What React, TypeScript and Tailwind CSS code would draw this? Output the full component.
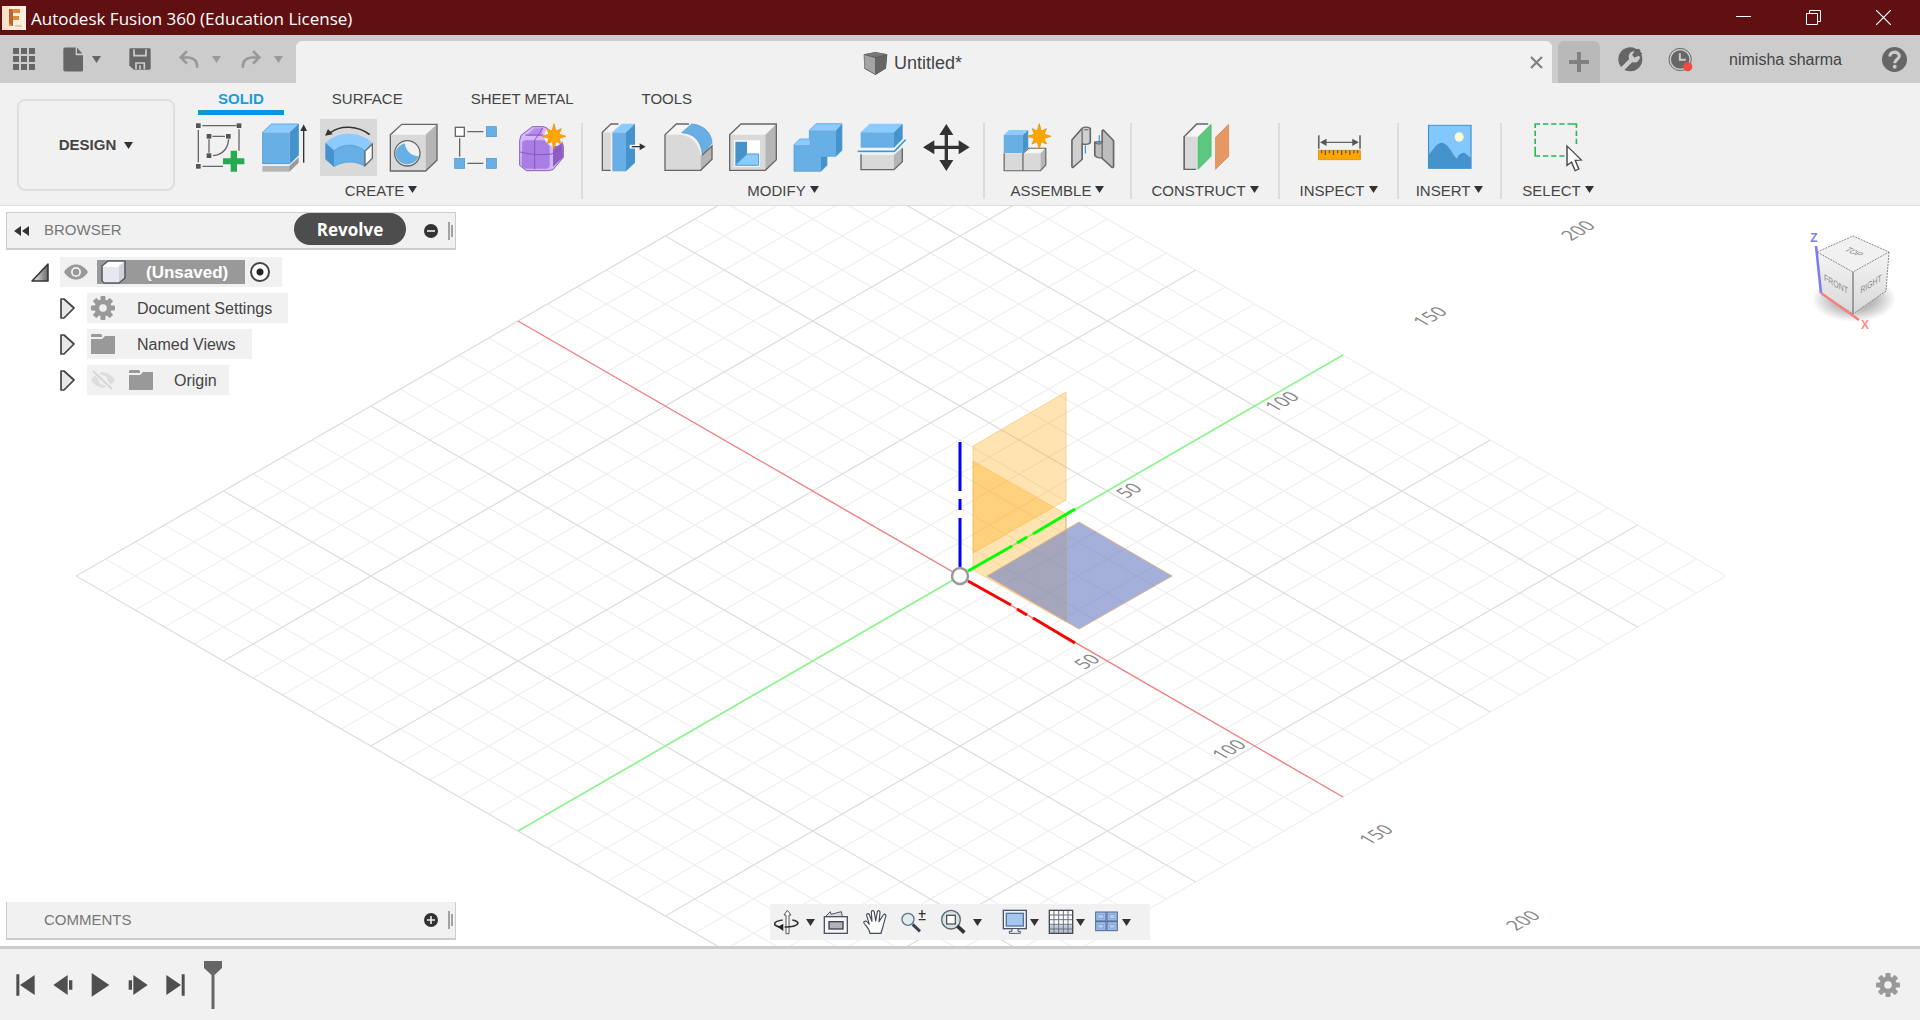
import React from "react";

const UI = "font-['Liberation_Sans',sans-serif]";
const HUMANIST = "font-['Open_Sans',sans-serif]";

/* ---------- shared pieces ---------- */

function Caret({ className = "text-[#333]" }: { className?: string }) {
  return (
    <svg className={`h-[7px] w-[9px] shrink-0 ${className}`} viewBox="0 0 9 7" aria-hidden="true">
      <path d="M0 0H9L4.500 7Z" fill="currentColor" />
    </svg>
  );
}

function Art({
  box,
  className,
  stretch = false,
  children,
}: {
  box: string;
  className: string;
  stretch?: boolean;
  children: React.ReactNode;
}) {
  return (
    <svg
      viewBox={box}
      className={`shrink-0 ${className}`}
      preserveAspectRatio={stretch ? "none" : "xMidYMid meet"}
      aria-hidden="true"
    >
      {children}
    </svg>
  );
}

function Tool({
  name,
  box,
  active = false,
  stretch = false,
  children,
}: {
  name: string;
  box: string;
  active?: boolean;
  stretch?: boolean;
  children: React.ReactNode;
}) {
  return (
    <div className="flex justify-center">
      <button type="button" aria-label={name} className={active ? "bg-[#d9d9d9]" : ""}>
        <Art box={box} className="h-[57px] w-[57px]" stretch={stretch}>
          {children}
        </Art>
      </button>
    </div>
  );
}

function Group({
  label,
  width,
  inner,
  last = false,
  children,
}: {
  label: string;
  width: string;
  inner: string;
  last?: boolean;
  children: React.ReactNode;
}) {
  return (
    <section className={`relative flex flex-col items-center pt-1 ${width}`}>
      <div className={`grid ${inner}`}>{children}</div>
      <button type="button" className="mt-[5px] flex items-center gap-1 text-[15px] leading-5 text-[#444]">
        {label}
        <span className="pb-1">
          <Caret />
        </span>
      </button>
      {!last && <span className="absolute right-0 top-2 h-[76px] w-[2px] bg-[#dcdcdc]" />}
    </section>
  );
}

/* ---------- title bar ---------- */

function TitleBar() {
  return (
    <header className={`flex h-[35px] items-center bg-[#611012] pl-[2px] pr-[2px] text-white ${HUMANIST}`}>
      <Art box="0 0 24 24" className="h-6 w-6">
        <rect width="24" height="24" fill="#fdeee0" />
        <path d="M0 0H8V24H0Z" fill="#fae0cb" />
        <path d="M7 3H18V7H11V10H17V14H11V20H7Z" fill="#e08a3c" />
        <path d="M7 3H10L11 7V20L7 17Z" fill="#b5662a" />
        <path d="M13 19H20V21H13Z" fill="#f6c79c" />
      </Art>
      <h1 className="ml-[5px] flex-1 pt-[2px] text-[17px] leading-6">Autodesk Fusion 360 (Education License)</h1>
      <button type="button" aria-label="Minimize" className="flex w-[70px] justify-center">
        <Art box="0 0 15 15" className="h-[15px] w-[15px]">
          <path d="M0 6.500H15" stroke="#fff" />
        </Art>
      </button>
      <button type="button" aria-label="Restore" className="flex w-[70px] justify-center">
        <Art box="0 0 15 15" className="h-[15px] w-[15px]">
          <path d="M.5 3.5H11.5V14.5H.5ZM3.500 3.500V.5H14.500V11.500H11.500" fill="none" stroke="#fff" />
        </Art>
      </button>
      <button type="button" aria-label="Close window" className="flex w-[70px] justify-center">
        <Art box="0 0 15 15" className="h-[15px] w-[15px]">
          <path d="M0 0L15 15M15 0L0 15" stroke="#fff" strokeWidth="1.2" />
        </Art>
      </button>
    </header>
  );
}

/* ---------- quick access and document tabs ---------- */

function TabBar() {
  return (
    <div className="flex h-12 items-stretch bg-[#ccc]">
      <div className="flex w-[296px] items-center pl-[13px]">
        <button type="button" aria-label="Data panel">
          <Art box="0 0 22 22" className="h-[22px] w-[22px]">
            {[0, 8, 16].map((y) =>
              [0, 8, 16].map((x) => <rect key={`${x}-${y}`} x={x} y={y} width="6" height="6" fill="#666" />),
            )}
          </Art>
        </button>
        <button type="button" aria-label="File" className="ml-7 flex items-center gap-[9px]">
          <Art box="188 140 60 74" className="h-[25px] w-5">
            <path d="M194 141H226V164H248V209Q248 213 244 213H194Q189 213 189 208V146Q189 141 194 141Z" fill="#666" />
            <path d="M230 142L246 159H230Z" fill="#666" />
          </Art>
          <Caret className="text-[#666]" />
        </button>
        <button type="button" aria-label="Save" className="ml-7">
          <Art box="390 144 66 66" className="h-[22px] w-[22px]">
            <path d="M395 145H451Q455 145 455 149V205Q455 209 451 209H405L391 197V149Q391 145 395 145Z" fill="#666" />
            <path d="M405 148V167H441V148M411 208V189H436V208M423 196V208" fill="none" stroke="#ccc" strokeWidth="5" />
          </Art>
        </button>
        <button type="button" aria-label="Undo" className="ml-7 flex items-center gap-[13px]">
          <Art box="540 150 60 56" className="h-[19px] w-5">
            <path d="M564 153L545 172L564 190M546 172H568Q595 174 595 203" fill="none" stroke="#999" strokeWidth="8" />
          </Art>
          <Caret className="text-[#999]" />
        </button>
        <button type="button" aria-label="Redo" className="ml-5 flex items-center gap-[13px]">
          <Art box="727 150 60 56" className="h-[19px] w-5">
            <path d="M763 153L782 172L763 190M781 172H759Q732 174 732 203" fill="none" stroke="#999" strokeWidth="8" />
          </Art>
          <Caret className="text-[#999]" />
        </button>
      </div>

      <div className="mt-[6px] flex flex-1 items-center rounded-t-[6px] bg-[#f1f1f1] pr-2">
        <div className="flex flex-1 items-center justify-center gap-[6px] pt-[2px] text-[18px] leading-6 text-[#444]">
          <Art box="130 58 76 74" className="h-[25px] w-[25px]">
            <path d="M132 67L168 60L204 67L200 110L168 130L134 111Z" fill="#555" />
            <path d="M134 69L167 78V127L135 109Z" fill="#a3a5a5" />
            <path d="M133 67L168 61L203 67L168 76Z" fill="#777" />
            <path d="M169 78L203 69L199 109L169 128Z" fill="#666" />
          </Art>
          Untitled*
        </div>
        <button type="button" aria-label="Close tab" className="p-[1px]">
          <Art box="0 0 13 13" className="h-[13px] w-[13px]">
            <path d="M1 1L12 12M12 1L1 12" stroke="#808080" strokeWidth="2.200" />
          </Art>
        </button>
      </div>

      <button
        type="button"
        aria-label="New design"
        className="ml-[6px] mt-[6px] flex w-[42px] items-center justify-center rounded-t-[6px] bg-[#b9b9b9]"
      >
        <Art box="0 0 20 20" className="h-5 w-5">
          <path d="M10 0V20M0 10H20" stroke="#808080" strokeWidth="4" />
        </Art>
      </button>

      <div className="flex items-center pl-[18px] pr-[13px]">
        <button type="button" aria-label="Extensions">
          <Art box="359 140 75 75" className="h-[25px] w-[25px]">
            <circle cx="396" cy="177" r="36" fill="#666" />
            <path d="M366 212L398 180" stroke="#ccc" strokeWidth="13" />
            <path d="M412 153A17 17 0 1 0 425 171" fill="#ccc" />
            <path d="M412 147L402 164L408 172L428 163L432 160L418 146Z" fill="#666" />
            <path d="M405 166L424 148" stroke="#666" strokeWidth="9" />
          </Art>
        </button>
        <button type="button" aria-label="Job status" className="ml-[25px]">
          <Art box="507 139 76 76" className="h-[25px] w-[25px]">
            <circle cx="544" cy="177" r="34" fill="none" stroke="#666" strokeWidth="3" />
            <circle cx="544" cy="177" r="28" fill="#666" />
            <path d="M543 158V178H561" fill="none" stroke="#ccc" strokeWidth="6" />
            <circle cx="567" cy="199" r="14" fill="#f04a41" />
          </Art>
        </button>
        <button type="button" className="ml-9 pt-px text-[16px] leading-5 text-[#444]">
          nimisha sharma
        </button>
        <button type="button" aria-label="Help" className="ml-10">
          <Art box="0 0 24 24" className="h-[25px] w-[25px]">
            <circle cx="12" cy="12" r="12" fill="#666" />
            <path d="M7.500 9.200C7.500 3.500 16.600 3.800 16.600 8.700C16.600 12 12.200 11.800 12.200 15.500" fill="none" stroke="#ccc" strokeWidth="3" />
            <circle cx="12.200" cy="19" r="1.900" fill="#ccc" />
          </Art>
        </button>
      </div>
    </div>
  );
}

/* ---------- ribbon tools ---------- */

const line = { fill: "none", stroke: "#666", strokeWidth: 4 };

function Star({ cx, cy, rx = 36, ry = 38 }: { cx: number; cy: number; rx?: number; ry?: number }) {
  const pts = Array.from({ length: 16 }, (_, i) => {
    const a = (i * Math.PI) / 8;
    const k = i % 2 ? 0.45 : i % 4 ? 0.86 : 1;
    return `${(cx + Math.sin(a) * rx * k).toFixed(1)},${(cy - Math.cos(a) * ry * k).toFixed(1)}`;
  }).join(" ");
  return <polygon points={pts} fill="#ffa500" stroke="#e09000" strokeWidth="2" />;
}

function CreateTools() {
  return (
    <>
      <Tool name="Create Sketch" box="577 357 171 171">
        <path d="M608 377H710M596 390V487M608 499H670M718 388V452M638 409H676M628 418V458M640 467C668 464 684 448 687 418" {...line} />
        {[[589, 370], [711, 370], [589, 492], [621, 402], [679, 402], [621, 460]].map(([x, y]) => (
          <rect key={`${x}-${y}`} x={x} y={y} width="14" height="14" fill="#555" />
        ))}
        <path d="M693 452H712V475H734V493H712V515H693V493H670V475H693Z" fill="#25ab50" />
      </Tool>
      <Tool name="Extrude" box="768 357 171 171">
        <path d="M787 498H868V515H787Z" fill="#b5b5b5" />
        <path d="M868 498L896 472V488L868 515Z" fill="#999" />
        <path d="M787 397L814 371H896L869 397Z" fill="#8ccbff" />
        <path d="M787 397H869V492H787Z" fill="#68afe5" />
        <path d="M869 397L896 371V466L869 492Z" fill="#4593cd" />
        <path d="M788 397V491H869L895 466V372H814Z" fill="none" stroke="#4998d2" strokeWidth="2" />
        <path d="M911 488V388" stroke="#333" strokeWidth="4" />
        <path d="M911 373L921 393H901Z" fill="#333" />
      </Tool>
      <Tool name="Revolve" box="961 357 171 171" active>
        <path d="M1110 404C1075 376 1022 375 992 398" fill="none" stroke="#333" strokeWidth="5" />
        <path d="M976 407L985 387L999 403Z" fill="#333" />
        <path d="M978 430C1010 392 1080 392 1119 430L1094 452C1068 430 1030 430 1003 452Z" fill="#8ccbff" />
        <path d="M978 430L1003 452V500L978 478Z" fill="#4593cd" />
        <path d="M1003 452C1030 430 1068 430 1094 452V498C1068 482 1030 482 1003 500Z" fill="#68afe5" />
        <path d="M978 430L1003 452C1030 430 1068 430 1094 452V498C1068 482 1030 482 1003 500L978 478Z" fill="none" stroke="#4593cd" strokeWidth="2" />
        <path d="M1096 453L1118 432V475L1096 497Z" fill="#fff" stroke="#666" strokeWidth="4" />
      </Tool>
      <Tool name="Hole" box="1156 357 171 171">
        <path d="M1172 404L1206 373H1312L1278 404Z" fill="#f4f4f4" />
        <path d="M1172 404H1278V513H1172Z" fill="#d9d9d9" />
        <path d="M1278 404L1312 373V481L1278 513Z" fill="#b5b5b5" />
        <path d="M1172 404L1206 373H1312V481L1278 513H1172Z" {...line} />
        <circle cx="1223" cy="460" r="38" fill="#f1f1f1" stroke="#666" strokeWidth="4" />
        <path d="M1215 430C1219 455 1236 468 1258 469C1247 495 1213 502 1196 481C1180 461 1190 437 1215 430Z" fill="#68afe5" />
      </Tool>
      <Tool name="Rectangular Pattern" box="1347 357 171 171">
        <path d="M1379 415V470M1402 395H1450M1402 490H1450" {...line} />
        <rect x="1366" y="382" width="27" height="27" fill="#fff" stroke="#666" strokeWidth="4" />
        {[[1364, 475], [1459, 380], [1459, 475]].map(([x, y]) => (
          <rect key={`${x}-${y}`} x={x} y={y} width="30" height="30" fill="#68afe5" stroke="#4593cd" strokeWidth="2" />
        ))}
      </Tool>
      <Tool name="Create Form" box="100 117 171 171">
        <path d="M120 181L124 166L158 140H192L232 158L251 197V232L220 269L204 272H140L120 256Z" fill="#d6b5ff" stroke="#8a5cb8" strokeWidth="3" strokeLinejoin="round" />
        <path d="M139 168L164 145H190L185 168Z" fill="#b88be8" />
        <path d="M220 195L248 178L250 232L220 260Z" fill="#8e5ec4" />
        <path d="M128 186Q130 181 138 181H201Q209 181 210 188V258Q209 265 201 266H139Q128 265 126 255Z" fill="#a87de4" />
        <path d="M165 180V268M122 216Q165 228 216 222M137 165H190M165 180L190 143M216 222L248 205" fill="none" stroke="#8558b8" strokeWidth="3" />
        <circle cx="223" cy="169" r="30" fill="#f1e8fb" />
        <Star cx={223} cy={169} />
      </Tool>
    </>
  );
}

function ModifyTools() {
  return (
    <>
      <Tool name="Press Pull" box="338 117 171 171">
        <path d="M366 157H391V271H366Z" fill="#d9d9d9" />
        <path d="M366 157L392 132H414L390 157Z" fill="#f6f6f6" />
        <path d="M414 132H392L366 157V271H391" {...line} />
        <path d="M396 157L424 131H464L437 157Z" fill="#8ccbff" />
        <path d="M396 157H437V274H396Z" fill="#68afe5" />
        <path d="M437 157L464 131V248L437 274Z" fill="#4593cd" />
        <path d="M448 200H478" stroke="#fff" strokeWidth="11" />
        <path d="M454 200H482" stroke="#333" strokeWidth="4" />
        <path d="M478 190L496 200L478 211Z" fill="#333" />
      </Tool>
      <Tool name="Fillet" box="532 117 171 171">
        <path d="M556 164L590 132H634L608 163Z" fill="#f6f6f6" />
        <path d="M556 164H606Q650 172 663 222V271H556Z" fill="#d9d9d9" />
        <path d="M663 228L697 196V238L663 271Z" fill="#b5b5b5" />
        <path d="M628 132H590L556 164V271H663L697 238V198L667 226" {...line} />
        <path d="M606 158L636 132C672 134 697 160 697 190L668 222C664 182 643 160 606 158Z" fill="#68afe5" stroke="#4593cd" strokeWidth="2" />
      </Tool>
      <Tool name="Shell" box="726 117 171 171">
        <path d="M749 164L783 132H889L856 164Z" fill="#f4f4f4" />
        <path d="M749 164H856V271H749Z" fill="#d9d9d9" />
        <path d="M856 164L889 132V239L856 271Z" fill="#b5b5b5" />
        <path d="M749 164L783 132H889V239L856 271H749Z" {...line} />
        <path d="M762 181H840V260H762Z" fill="#fff" />
        <path d="M766 185H801V222L766 256Z" fill="#4593cd" />
        <path d="M766 256L801 222H836V256Z" fill="#8ccbff" stroke="#4fa0dc" strokeWidth="3" />
      </Tool>
      <Tool name="Combine" box="920 117 171 171">
        <path d="M987 151L1007 131H1085L1067 151Z" fill="#8ccbff" />
        <path d="M941 194L958 177H987V194Z" fill="#8ccbff" />
        <path d="M987 151H1067V229H1022V274H941V194H987Z" fill="#68afe5" />
        <path d="M1067 151L1085 131V211L1067 229ZM1022 229H1040V256L1022 274Z" fill="#4593cd" />
        <path d="M941 194L958 177H987V151L1007 131H1085V211L1067 229H1040V256L1022 274H941Z" fill="none" stroke="#4998d2" strokeWidth="2" />
      </Tool>
      <Tool name="Split Body" box="1114 117 171 171">
        <path d="M1144 225H1243V269H1144Z" fill="#d9d9d9" />
        <path d="M1243 225L1268 203V245L1243 269Z" fill="#b5b5b5" />
        <path d="M1144 223V269H1243L1268 245V205" {...line} />
        <path d="M1143 157L1170 131H1269L1243 157Z" fill="#8ccbff" />
        <path d="M1143 157H1243V203H1143Z" fill="#68afe5" />
        <path d="M1243 157L1269 131V177L1243 203Z" fill="#4593cd" />
        <path d="M1134 214H1244L1278 179" fill="none" stroke="#fff" strokeWidth="10" />
        <path d="M1134 214H1244L1278 179" fill="none" stroke="#3a96d8" strokeWidth="5" />
      </Tool>
      <Tool name="Move" box="1308 117 171 171">
        <path d="M1399 158V246M1356 202H1442" stroke="#333" strokeWidth="10" />
        <path d="M1399 132L1420 165H1378ZM1399 273L1420 240H1378ZM1329 202L1363 181V223ZM1469 202L1436 181V223Z" fill="#333" />
      </Tool>
    </>
  );
}

function AssembleTools() {
  return (
    <>
      <Tool name="New Component" box="40.500 117 139.600 171" stretch>
        <path d="M58 220H104V272H58Z" fill="#d9d9d9" />
        <path d="M104 220L118 204H160L147 220Z" fill="#f6f6f6" />
        <path d="M104 220H147V272H104Z" fill="#d9d9d9" />
        <path d="M147 220L160 204V255L147 272Z" fill="#b5b5b5" />
        <path d="M58 220V272H147L160 255V205H118L104 220V272" {...line} strokeWidth="3" />
        <path d="M57 165L70 150H117L104 165Z" fill="#8ccbff" />
        <path d="M57 165H104V219H57Z" fill="#68afe5" />
        <path d="M104 165L117 150V202L104 219Z" fill="#4593cd" />
        <ellipse cx="144" cy="169" rx="25" ry="30" fill="#f1f1f1" />
        <Star cx={144} cy={169} rx={29} />
      </Tool>
      <Tool name="Joint" box="199.700 117 139.600 171" stretch>
        <path d="M224 180L249 145Q258 138 269 145V188Q265 196 249 192V238L226 263Q223 262 224 258Z" fill="#cfcfcf" stroke="#666" strokeWidth="4" />
        <path d="M249 148V192M254 149H264" {...line} strokeWidth="3" />
        <path d="M257 196V220" stroke="#3a96d8" strokeWidth="3" />
        <path d="M326 182L301 150Q297 151 298 158V184L280 186V226Q282 233 297 234L323 263Q327 262 326 258Z" fill="#bdbdbd" stroke="#666" strokeWidth="4" />
        <path d="M281 190Q298 196 298 184V234" {...line} strokeWidth="3" />
        <path d="M291 166V193" stroke="#3a96d8" strokeWidth="3" />
      </Tool>
    </>
  );
}

function Ribbon() {
  const tab = "h-8 px-5 pt-1 border-b-[5px] text-[15px] leading-6";
  return (
    <div className="flex min-h-[123px] border-b border-[#dedede] bg-[#f1f1f1]">
      <button
        type="button"
        className="ml-[17px] mt-4 flex h-[92px] w-[158px] items-center justify-center gap-2 rounded-[8px] border-2 border-[#dfdfdf] text-[15px] font-bold text-[#444]"
      >
        DESIGN
        <Caret />
      </button>
      <div className="ml-[6px] flex-1">
        <nav className="flex gap-7 pl-[17px] text-[#444]" aria-label="Workspace tabs">
          <button type="button" className={`${tab} border-[#0c95dc] font-bold text-[#1c9cdf]`}>SOLID</button>
          <button type="button" className={`${tab} border-transparent`}>SURFACE</button>
          <button type="button" className={`${tab} border-transparent`}>SHEET METAL</button>
          <button type="button" className={`${tab} border-transparent`}>TOOLS</button>
        </nav>
        <div className="flex">
          <Group label="CREATE" width="w-[402px] pr-[2px]" inner="w-[386px] grid-cols-6">
            <CreateTools />
          </Group>
          <Group label="MODIFY" width="w-[402px] pr-[2px]" inner="w-[388px] grid-cols-6">
            <ModifyTools />
          </Group>
          <Group label="ASSEMBLE" width="w-[147px] pr-[2px]" inner="w-[130px] grid-cols-2">
            <AssembleTools />
          </Group>
          <Group label="CONSTRUCT" width="w-[148px] pr-[2px]" inner="grid-cols-1">
            <Tool name="Offset Plane" box="481.500 117 139.600 171" stretch>
              <path d="M499 170L530 132H562L532 168Z" fill="#f6f6f6" />
              <path d="M499 170H530V268H499Z" fill="#d9d9d9" />
              <path d="M558 132H530L499 170V268H528" {...line} />
              <path d="M533 172L565 133V229L533 268Z" fill="#5bc880" stroke="#4cae6e" strokeWidth="2" />
              <path d="M576 172L608 133V229L576 268Z" fill="#e59863" stroke="#d4854e" strokeWidth="2" />
            </Tool>
          </Group>
          <Group label="INSPECT" width="w-[119px] pr-[2px]" inner="grid-cols-1">
            <Tool name="Measure" box="808.500 117 139.600 171" stretch>
              <path d="M830 166V206M931 166V206M840 187H922" {...line} />
              <path d="M833 187L849 176V198ZM928 187L912 176V198Z" fill="#555" />
              <path d="M829 211H932V239H829Z" fill="#ffa500" stroke="#d98e0a" strokeWidth="2" />
              <path d="M837 211V220M846 211V225M856 211V220M866 211V225M876 211V220M886 211V225M896 211V220M906 211V225M916 211V220M925 211V220" stroke="#555" strokeWidth="3" />
            </Tool>
          </Group>
          <Group label="INSERT" width="w-[103px] pr-[2px]" inner="grid-cols-1">
            <Tool name="Insert Image" box="1080.500 117 139.600 171" stretch>
              <rect x="1099" y="136" width="104" height="129" fill="#82c8ff" stroke="#4593cd" strokeWidth="3" />
              <path d="M1099 226C1118 195 1124 186 1135 189C1148 193 1158 224 1168 236C1174 222 1180 216 1188 219L1203 234V265H1099Z" fill="#4593cd" />
              <ellipse cx="1174" cy="171" rx="11" ry="14" fill="#fffbd0" />
            </Tool>
          </Group>
          <Group label="SELECT" width="w-[112px]" inner="grid-cols-1" last>
            <Tool name="Select" box="1346.300 117 139.600 171" stretch>
              <path d="M1359 144V132H1371M1378 132H1391M1398 132H1411M1418 132H1431M1438 132H1460V144M1460 152V168M1460 176V192M1359 152V168M1359 176V192M1359 200V228H1371M1378 228H1391M1398 228H1411M1418 228H1431" fill="none" stroke="#2db55a" strokeWidth="4" />
              <path d="M1437 198V256L1448 246L1457 272L1466 267L1457 241L1472 240Z" fill="#fff" stroke="#444" strokeWidth="3.500" />
            </Tool>
          </Group>
        </div>
      </div>
    </div>
  );
}

/* ---------- 3D viewport ---------- */

const MIN = -15;
const MAX = 13;
const project = (u: number, v: number) => [960 + (u + v) * 29.46, 576 + (u - v) * 17];

function gridPath(major: boolean) {
  const parts: string[] = [];
  for (let i = MIN; i <= MAX; i++) {
    if ((i % 5 === 0) !== major || i === 0) continue;
    const [a, b] = project(i, MIN);
    const [c, d] = project(i, MAX);
    const [e, f] = project(MIN, i);
    const [g, h] = project(MAX, i);
    parts.push(`M${a} ${b}L${c} ${d}M${e} ${f}L${g} ${h}`);
  }
  return parts.join("");
}

const rulerLabels: [string, number, number][] = [
  ["50", 1128, 490],
  ["100", 1281, 401],
  ["150", 1429, 316],
  ["200", 1577, 230],
  ["50", 1086, 661],
  ["100", 1228, 749],
  ["150", 1375, 834],
  ["200", 1522, 920],
];

function Scene() {
  return (
    <svg
      className="absolute inset-0 h-full w-full"
      viewBox="0 206 1920 740"
      preserveAspectRatio="xMidYMid slice"
      role="img"
      aria-label="Modeling grid with origin planes"
    >
      <path d={gridPath(false)} stroke="#f0f0f0" strokeWidth="1.300" fill="none" />
      <path d={gridPath(true)} stroke="#dedede" strokeWidth="1.300" fill="none" />
      <path d="M518 321L1343 797" stroke="#f08080" strokeWidth="1.400" />
      <path d="M518 831L1343 355" stroke="#8cf58c" strokeWidth="1.700" />
      {rulerLabels.map(([t, x, y]) => (
        <text
          key={`${t}-${x}`}
          transform={`translate(${x} ${y}) rotate(-30) skewX(30)`}
          textAnchor="middle"
          dominantBaseline="central"
          className="fill-[#858585] font-['Open_Sans',sans-serif] text-[17px]"
        >
          {t}
        </text>
      ))}
      <path d="M973 446L1066 392V500L973 553Z" fill="#ffa500" fillOpacity=".3" stroke="#f5c068" strokeOpacity=".6" />
      <path d="M973 461L1066 514V622L973 570Z" fill="#ffa500" fillOpacity=".3" stroke="#f5c068" strokeOpacity=".6" />
      <path d="M987 576L1079 522L1172 576L1079 629Z" fill="#697bc1" fillOpacity=".6" stroke="#dcb48c" />
      <path d="M1066 514V622" stroke="#c9a77f" strokeOpacity=".7" />
      <path d="M960 442V491M960 499V510M960 518V567" stroke="#00f" strokeWidth="3" />
      <path d="M968 571L1012 546M1017 543L1027 537M1033 534L1075 509" stroke="#0f0" strokeWidth="3" />
      <path d="M968 581L1011 605M1017 609L1027 615M1033 618L1075 643" stroke="#f00" strokeWidth="3" />
      <circle cx="960" cy="576" r="8" fill="#fff" fillOpacity=".9" stroke="#999" strokeWidth="2.500" />
    </svg>
  );
}

function ViewCube() {
  return (
    <svg className="absolute right-[14px] top-[18px] h-[120px] w-[106px]" viewBox="1800 224 106 120" role="img" aria-label="View cube">
      <defs>
        <radialGradient id="cube-shadow">
          <stop offset="0.5" stopColor="#777" stopOpacity=".5" />
          <stop offset="1" stopColor="#777" stopOpacity="0" />
        </radialGradient>
        <linearGradient id="cube-side" x1="0" y1="0" x2="0" y2="1">
          <stop offset="0" stopColor="#f4f4f4" />
          <stop offset="1" stopColor="#d8d8d8" />
        </linearGradient>
      </defs>
      <ellipse cx="1854" cy="299" rx="42" ry="23" fill="url(#cube-shadow)" />
      <path d="M1817 252L1853 236L1889 252L1853 272Z" fill="#f1f1f1" />
      <path d="M1817 252L1853 272V314L1821 293Z" fill="url(#cube-side)" />
      <path d="M1889 252L1853 272V314L1886 291Z" fill="url(#cube-side)" />
      <path d="M1817 252L1853 236L1889 252L1853 272ZM1889 252L1886 291L1853 314L1821 293L1817 252" fill="none" stroke="#888" strokeDasharray="2 1" />
      <path d="M1853 272V314" stroke="#777" strokeWidth="1.300" />
      <path d="M1816 246L1821 293" stroke="#7a7af5" strokeWidth="2.500" />
      <path d="M1821 293L1859 320" stroke="#f58080" strokeWidth="2.500" />
      <g textAnchor="middle" dominantBaseline="central" className="fill-[#888] font-['Liberation_Sans',sans-serif] text-[12px]">
        <text transform="translate(1854 252) rotate(25) skewX(-35)" className="text-[8px]">TOP</text>
        <text transform="translate(1836 284) rotate(30) skewX(30)" className="text-[8px]">FRONT</text>
        <text transform="translate(1871 284) rotate(-32) skewX(-32)" className="text-[8px]">RIGHT</text>
        <text x="1814" y="238" className="fill-[#7f7ff8] font-bold">Z</text>
        <text x="1865" y="325" className="fill-[#ff8a8a] font-bold">X</text>
      </g>
    </svg>
  );
}

/* ---------- browser panel ---------- */

function Grip() {
  return (
    <svg className="mx-[2px] h-[18px] w-[5px]" viewBox="0 0 5 18" aria-hidden="true">
      <path d="M1 0V18M4 3V15" stroke="#888" strokeWidth="1.500" />
    </svg>
  );
}

function RoundSign({ plus = false }: { plus?: boolean }) {
  return (
    <Art box="0 0 14 14" className="h-[14px] w-[14px]">
      <circle cx="7" cy="7" r="7" fill="#333" />
      <path d={plus ? "M3 7H11M7 3V11" : "M3 7H11"} stroke="#f1f1f1" strokeWidth="1.600" />
    </Art>
  );
}

function Folder() {
  return (
    <Art box="0 0 24 20" className="h-5 w-6">
      <path d="M1 0H10L11 1V3H0V1ZM0 5H11L14 2H24V20H0Z" fill="#999" />
    </Art>
  );
}

function Gear({ className }: { className: string }) {
  return (
    <Art box="-12 -12 24 24" className={className}>
      {[0, 45, 90, 135].map((a) => (
        <rect key={a} x="-2.500" y="-12" width="5" height="24" rx="1" fill="#999" transform={`rotate(${a})`} />
      ))}
      <circle r="8.500" fill="#999" />
      <circle r="3.800" fill="#f1f1f1" />
    </Art>
  );
}

function Expander() {
  return (
    <button type="button" aria-label="Expand" className="mr-3 ml-[60px]">
      <Art box="0 0 15 21" className="h-[21px] w-[15px]">
        <path d="M1 1H4L14 10L4 20H1Z" fill="#e8e8ea" stroke="#444" strokeWidth="1.700" strokeLinejoin="round" />
      </Art>
    </button>
  );
}

function BrowserPanel() {
  const row = "flex h-[30px] items-center text-[16px] leading-5 text-[#444]";
  const label = "pt-[2px]";
  return (
    <aside className="relative pt-[6px]">
      <div className="ml-[6px] flex h-[38px] w-[450px] items-center border border-[#ccc] border-b-2 bg-[#f1f1f1] pl-[7px] text-[15px] text-[#777]">
        <button type="button" aria-label="Collapse" className="mr-[15px]">
          <Art box="0 0 15 10" className="h-[10px] w-[15px]">
            <path d="M7 0V10L0 5ZM15 0V10L8 5Z" fill="#333" />
          </Art>
        </button>
        <h2 className="flex-1">BROWSER</h2>
        <button type="button" aria-label="Minimize browser" className="mr-2">
          <RoundSign />
        </button>
        <Grip />
      </div>
      <div
        role="tooltip"
        className={`absolute left-[294px] top-[7px] flex h-8 w-[112px] items-center justify-center rounded-full bg-[#4d4d4d] pt-px text-[17px] font-bold text-white ${HUMANIST}`}
      >
        Revolve
      </div>

      <ul className="mt-[7px] flex flex-col gap-[6px]">
        <li className={row}>
          <button type="button" aria-label="Collapse root" className="mr-[11px] ml-[31px]">
            <Art box="0 0 18 19" className="h-[19px] w-[18px]">
              <defs>
                <linearGradient id="root-marker">
                  <stop offset="0.3" stopColor="#ccc" />
                  <stop offset="1" stopColor="#666" />
                </linearGradient>
              </defs>
              <path d="M17 1V18H1Z" fill="url(#root-marker)" stroke="#333" strokeWidth="1.500" strokeLinejoin="round" />
            </Art>
          </button>
          <div className="flex h-[30px] w-[222px] items-center bg-[#f1f1f1] pl-1">
            <button type="button" aria-label="Toggle visibility">
              <Art box="0 0 24 16" className="h-4 w-6">
                <path d="M0 8C6-2 18-2 24 8C18 18 6 18 0 8Z" fill="#999" />
                <circle cx="12" cy="8" r="5" fill="#f1f1f1" />
                <circle cx="12" cy="8" r="3.200" fill="#999" />
              </Art>
            </button>
            <div className="ml-[9px] flex h-6 w-[148px] items-center bg-[#999] pl-1 text-[17px] font-bold text-white">
              <Art box="0 0 25 24" className="mr-5 h-6 w-[25px]">
                <path d="M1 6L7 1H24V18L18 23H1Z" fill="#fff" />
                <path d="M18 6L24 1V18L18 23Z" fill="#d0d3da" />
                <path d="M2 7H18V22H2Z" fill="#e6e8ee" />
                <path d="M1 6L7 1H24V18L18 23H3L1 21Z" fill="none" stroke="#555b66" strokeWidth="1.600" strokeLinejoin="round" />
              </Art>
              <span className="pt-px">(Unsaved)</span>
            </div>
            <input
              type="radio"
              aria-label="Activate component"
              defaultChecked
              className="ml-[5px] h-5 w-5 appearance-none rounded-full border-2 border-[#444] bg-[radial-gradient(circle,#222_0_3px,#fff_4px)]"
            />
          </div>
        </li>
        <li className={row}>
          <Expander />
          <div className="flex h-[30px] w-[201px] items-center gap-[22px] bg-[#f1f1f1] pl-1">
            <Gear className="h-6 w-6" />
            <span className={label}>Document Settings</span>
          </div>
        </li>
        <li className={row}>
          <Expander />
          <div className="flex h-[30px] w-[165px] items-center gap-[22px] bg-[#f1f1f1] pl-1">
            <Folder />
            <span className={label}>Named Views</span>
          </div>
        </li>
        <li className={row}>
          <Expander />
          <div className="flex h-[30px] w-[142px] items-center bg-[#f1f1f1] pl-1">
            <Art box="0 0 24 20" className="mr-[14px] h-5 w-6">
              <path d="M0 10C6 0 18 0 24 10C18 20 6 20 0 10Z" fill="#ddd" />
              <circle cx="12" cy="10" r="4.500" fill="#f1f1f1" />
              <path d="M2 0L22 20" stroke="#f1f1f1" strokeWidth="5" />
              <path d="M2 1L21 19" stroke="#d6d6d6" strokeWidth="2" />
            </Art>
            <span className="mr-[21px] flex">
              <Folder />
            </span>
            <span className={label}>Origin</span>
          </div>
        </li>
      </ul>
    </aside>
  );
}

/* ---------- navigation bar ---------- */

function NavTool({
  name,
  box,
  caret = "",
  className = "",
  children,
}: {
  name: string;
  box: string;
  caret?: string;
  className?: string;
  children: React.ReactNode;
}) {
  return (
    <button type="button" aria-label={name} className={`flex items-center ${className}`}>
      <Art box={box} className="h-[26px] w-[26px]">
        {children}
      </Art>
      {caret && (
        <span className={caret}>
          <Caret />
        </span>
      )}
    </button>
  );
}

function NavBar() {
  return (
    <div role="toolbar" aria-label="Navigation" className="flex h-9 w-[380px] items-center bg-[#f1f1f1] pl-1">
      <NavTool name="Orbit" box="102 84 78 78" caret="ml-[6px]">
        <path d="M138 102V158H147V102H153L142 88L132 102Z" fill="#fff" stroke="#555" strokeWidth="3" />
        <path d="M128 117C96 122 98 134 120 138M157 117C186 122 176 139 134 138" fill="none" stroke="#333" strokeWidth="5" />
        <path d="M113 138L130 128V150Z" fill="#222" />
      </NavTool>
      <NavTool name="Look At" box="250 84 78 78" className="ml-2">
        <path d="M258 106L272 92L274 100L305 92L308 106" fill="#d9dbe0" stroke="#4c5568" strokeWidth="3" />
        <rect x="254" y="107" width="69" height="50" fill="#f8f8fa" stroke="#4c5568" strokeWidth="4" />
        <rect x="268" y="122" width="42" height="22" fill="#b0b2bd" stroke="#444" strokeWidth="4" />
      </NavTool>
      <NavTool name="Pan" box="366 84 78 78" className="ml-[13px]">
        <path d="M390 157C388 140 374 132 371 124C374 117 382 121 388 130L380 104C379 97 386 96 388 101L396 121L394 94C394 87 402 87 403 94L407 120L412 93C413 87 421 88 420 95L417 122L430 102C434 97 440 101 437 107L429 136C427 146 424 150 423 157Z" fill="#fbfbfb" stroke="#444b58" strokeWidth="3.500" strokeLinejoin="round" />
      </NavTool>
      <NavTool name="Zoom" box="484 84 78 78" className="ml-[13px]">
        <circle cx="505" cy="115" r="18" fill="#deeeee" stroke="#5f7580" strokeWidth="4" />
        <path d="M519 130L541 151" stroke="#3a4152" strokeWidth="9" />
        <path d="M547 87V110M537 98H558M537 116H558" stroke="#333" strokeWidth="4" />
      </NavTool>
      <NavTool name="Fit" box="600 84 78 78" caret="ml-[7px]" className="ml-[13px]">
        <circle cx="633" cy="116" r="28" fill="#d5e5e3" stroke="#5b6670" strokeWidth="4" />
        <rect x="620" y="103" width="26" height="26" fill="#fff" stroke="#555" strokeWidth="4" />
        <path d="M652 135L673 155" stroke="#333" strokeWidth="11" />
      </NavTool>
      <NavTool name="Display Settings" box="786 84 78 78" caret="ml-[2px]" className="ml-5">
        <rect x="790" y="88" width="69" height="55" fill="#f1f1f4" stroke="#4c5568" strokeWidth="4" />
        <rect x="799" y="97" width="51" height="38" fill="#a5c6ee" stroke="#54759f" strokeWidth="4" />
        <path d="M816 144V151H808V157H841V151H834V144" fill="#eee" stroke="#4c5568" strokeWidth="3" />
      </NavTool>
      <NavTool name="Grid and Snaps" box="925 84 78 78" caret="ml-[2px]" className="ml-[9px]">
        <rect x="929" y="88" width="70" height="69" fill="#fafafa" />
        <path d="M929 133H999V157H929Z" fill="#bcc4d6" />
        <path d="M943 88V157M957 88V157M971 88V157M985 88V157M929 102H999M929 116H999M929 130H999M929 144H999" fill="none" stroke="#6b7180" strokeWidth="3" />
        <rect x="929" y="88" width="70" height="69" fill="none" stroke="#4a4a50" strokeWidth="4" />
      </NavTool>
      <NavTool name="Viewports" box="1064 84 78 78" caret="ml-[2px]" className="ml-[9px]">
        {[[1069, 93], [1103, 93], [1069, 122], [1103, 122]].map(([x, y]) => (
          <g key={`${x}-${y}`}>
            <rect x={x} y={y} width="31" height="27" fill="#9dbbe6" stroke="#4a6596" strokeWidth="3" />
            <rect x={x + 7} y={y + 8} width="17" height="11" fill="#b3cdee" stroke="#7c9ccb" strokeWidth="2" />
          </g>
        ))}
      </NavTool>
    </div>
  );
}

/* ---------- timeline ---------- */

function Timeline() {
  const items: [string, string, string, string][] = [
    ["Go to start", "48 252 57 66", "M49 253H58V317H49ZM104 255V315L60 285Z", "h-[22px] w-[19px]"],
    ["Step back", "158 252 60 66", "M202 255V315L159 285ZM206 271H216V299H206Z", "h-[22px] w-5"],
    ["Play", "273 249 57 72", "M275 249V320L328 285Z", "h-6 w-[19px]"],
    ["Step forward", "381 252 60 66", "M397 255V315L440 285ZM383 271H393V299H383Z", "h-[22px] w-5"],
    ["Go to end", "498 252 57 66", "M545 253H554V317H545ZM499 255V315L543 285Z", "h-[22px] w-[19px]"],
  ];
  return (
    <footer className="flex h-[74px] items-center border-t-[3px] border-[#ccc] bg-[#f1f1f1] pl-4 pr-5">
      <div className="flex flex-1 items-center gap-[18px]">
        {items.map(([name, box, d, size]) => (
          <button key={name} type="button" aria-label={name}>
            <Art box={box} className={size}>
              <path d={d} fill="#4f4f51" />
            </Art>
          </button>
        ))}
        <Art box="0 0 20 49" className="h-[49px] w-5">
          <path d="M1 1H19V8L11.500 15V49H8.500V15L1 8Z" fill="#666" />
        </Art>
      </div>
      <button type="button" aria-label="Timeline settings">
        <Gear className="h-6 w-6" />
      </button>
    </footer>
  );
}

export default function App() {
  return (
    <div className={`flex min-h-screen flex-col bg-white ${UI}`}>
      <TitleBar />
      <TabBar />
      <Ribbon />
      <main className="relative flex flex-1 flex-col justify-between overflow-hidden">
        <Scene />
        <ViewCube />
        <BrowserPanel />
        <div className="relative grid grid-cols-[1fr_auto_1fr] items-end pb-[6px]">
          <div className="ml-[6px] flex h-[38px] w-[450px] items-center border-x border-b-2 border-[#ccc] bg-[#f1f1f1] pl-[37px] text-[15px] text-[#777]">
            <h2 className="flex-1">COMMENTS</h2>
            <button type="button" aria-label="Add comment" className="mr-2">
              <RoundSign plus />
            </button>
            <Grip />
          </div>
          <NavBar />
        </div>
      </main>
      <Timeline />
    </div>
  );
}
